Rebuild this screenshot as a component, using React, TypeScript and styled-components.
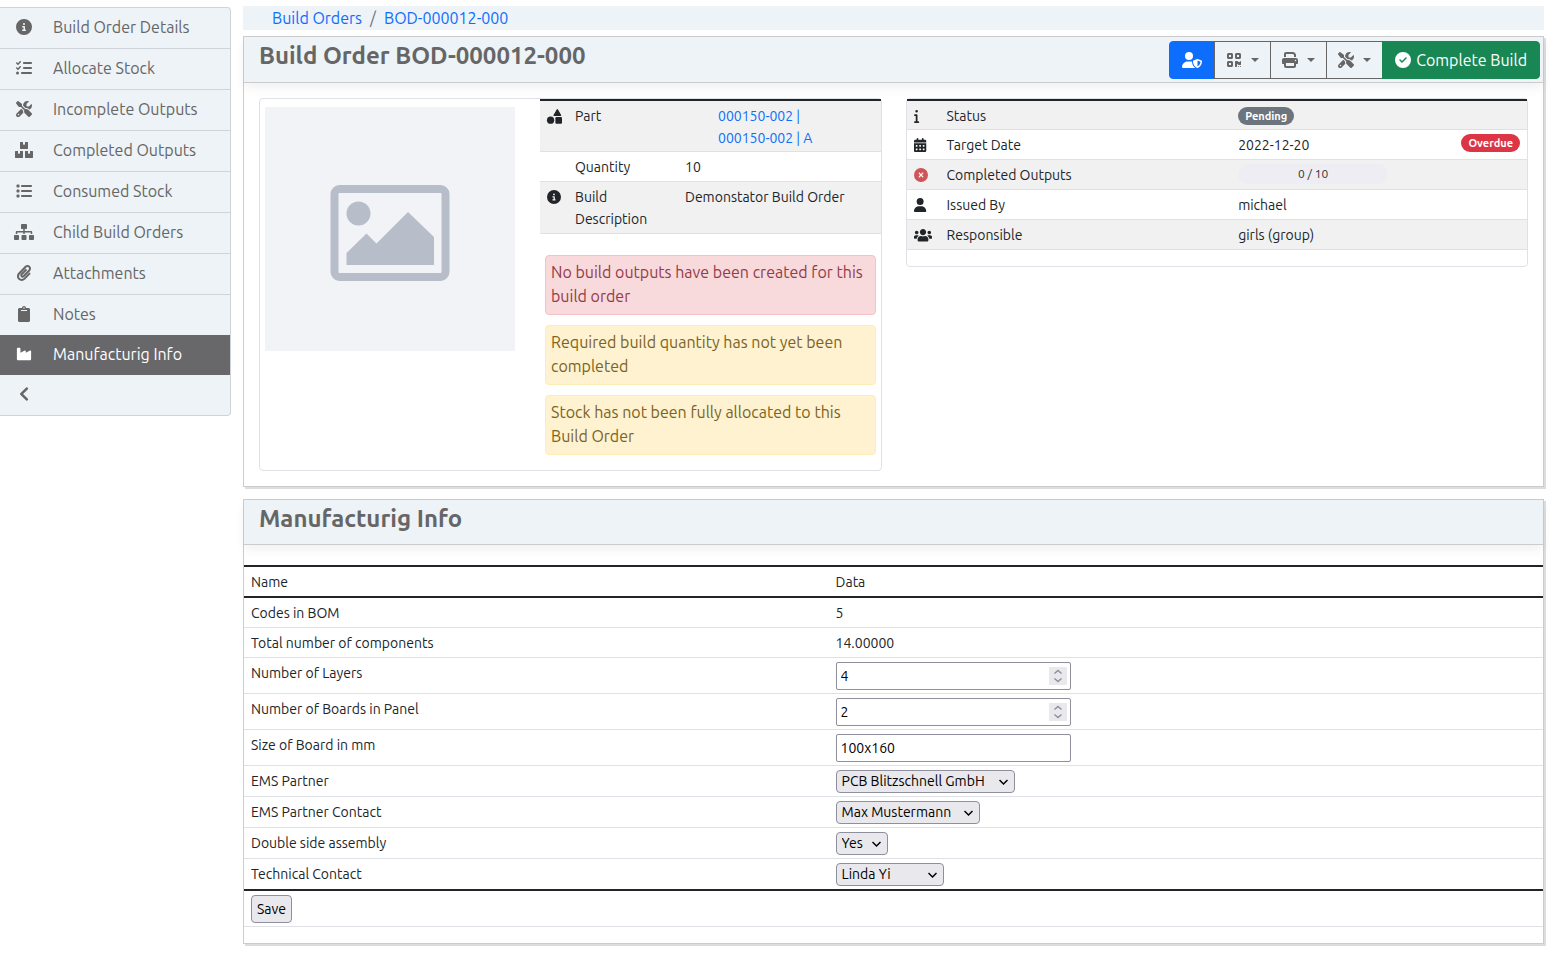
import React from "react";
import styled, { createGlobalStyle, css } from "styled-components";
import {
  FaCircleInfo,
  FaListCheck,
  FaScrewdriverWrench,
  FaList,
  FaIndustry,
  FaUserShield,
  FaQrcode,
  FaPrint,
  FaCircleCheck,
  FaInfo,
  FaCalendarDays,
  FaCircleXmark,
  FaUser,
} from "react-icons/fa6";
import { FaBoxes, FaChevronLeft, FaClipboard, FaPaperclip, FaSitemap, FaUsers } from "react-icons/fa";

const GlobalStyle = createGlobalStyle`
  *, *::before, *::after { box-sizing: border-box; }
  body {
    margin: 0;
    background: #fff;
    color: #212529;
    font-family: "Ubuntu", "Noto Sans", "Open Sans", sans-serif;
    font-size: 16px;
    line-height: 24px;
  }
  a { color: #0d6efd; text-decoration: none; }
  svg { display: block; }
`;

const Page = styled.div`
  display: flex;
  align-items: flex-start;
  gap: 12px;
  padding: 6px 6px 9px 0;
`;

/* Sidebar */

const Sidebar = styled.nav`
  flex: 0 0 231px;
  margin-top: 1px;
  border: 1px solid #ced4da;
  border-left: 0;
  border-radius: 0 4px 4px 0;
  background: #edf3f7;
  overflow: hidden;
`;

const SideLink = styled.a<{ $active?: boolean; $last?: boolean }>`
  display: grid;
  grid-template-columns: 48px 1fr;
  align-items: center;
  column-gap: 5px;
  height: 41px;
  padding-bottom: 2px;
  color: #666;
  border-bottom: 1px solid #ced4da;
  svg { justify-self: center; }
  ${(p) =>
    p.$active &&
    css`
      height: 40px;
      background: #68686a;
      color: #fff;
      border-bottom: 0;
    `}
  ${(p) =>
    p.$last &&
    css`
      height: 40px;
      border-bottom: 0;
    `}
`;

/* Main column */

const Main = styled.main`
  flex: 1;
  min-width: 0;
`;

const Breadcrumb = styled.nav`
  display: flex;
  gap: 8px;
  height: 24px;
  padding-left: 29px;
  margin-bottom: 6px;
  background: #edf3f7;
  color: #6c757d;
`;

const Panel = styled.section`
  border: 1px solid #ccc;
  background: #fff;
  box-shadow: 2px 2px #ddd;
  margin-bottom: 12px;
`;

const PanelHeader = styled.header`
  display: flex;
  justify-content: space-between;
  align-items: flex-start;
  min-height: 45px;
  padding: 4px 3px 3px 15px;
  background: #edf3f7;
  border-bottom: 1px solid #ccc;
  box-shadow: 0 5px 10px rgba(0, 0, 0, 0.06);
`;

const Title = styled.h4`
  margin: 0;
  color: #666;
  font-size: 24px;
  font-weight: 600;
  line-height: 30px;
`;

const Toolbar = styled.div`
  display: flex;
`;

const ToolButton = styled.button<{ $tone?: "primary" | "success" }>`
  display: flex;
  align-items: center;
  justify-content: center;
  gap: 7px;
  height: 38px;
  padding: 0 11px;
  font: inherit;
  color: #666;
  background: #edf3f7;
  border: 1px solid #666;
  margin-left: -1px;
  ${(p) =>
    p.$tone === "primary" &&
    css`
      color: #fff;
      background: #0d6efd;
      border-color: #0d6efd;
      border-radius: 4px 0 0 4px;
      padding: 0 12px;
    `}
  ${(p) =>
    p.$tone === "success" &&
    css`
      color: #fff;
      background: #198754;
      border-color: #198754;
      border-radius: 0 4px 4px 0;
      gap: 5px;
      padding: 0 12px;
    `}
`;

const Caret = styled.span`
  margin-left: 2px;
  border: 4px solid transparent;
  border-top-color: currentColor;
  border-bottom: 0;
`;

const DetailGrid = styled.div`
  display: grid;
  grid-template-columns: 1fr 1fr;
  align-items: start;
  gap: 24px;
  padding: 15px;
`;

const Card = styled.div<{ $split?: boolean }>`
  display: grid;
  grid-template-columns: ${(p) => (p.$split ? "280px minmax(0, 1fr)" : "minmax(0, 1fr)")};
  border: 1px solid #dee2e6;
  border-radius: 4px;
`;

const Thumb = styled.div`
  padding: 8px 5px;
`;

const Table = styled.table<{ $striped?: boolean }>`
  width: 100%;
  table-layout: fixed;
  border-collapse: separate;
  border-spacing: 0;
  border-top: 2px solid #212529;
  margin-bottom: 16px;
  font-size: 14px;
  line-height: 22px;
  td, th {
    padding: 4px 7px 3px;
    border-bottom: 1px solid #dee2e6;
    vertical-align: top;
    text-align: left;
    font-weight: 400;
  }
  td > svg {
    margin-top: 4px;
    overflow: visible;
  }
  ${(p) =>
    p.$striped &&
    css`
      tr:nth-child(odd) > * { background: #f1f1f1; }
      tr:first-child > * { padding-bottom: 2px; }
    `}
`;

const Col = styled.col<{ $w: string }>`
  width: ${(p) => p.$w};
`;

const PartCell = styled.td`
  && { padding-left: 40px; }
`;

const ValueLine = styled.div`
  display: flex;
  justify-content: space-between;
  align-items: center;
  height: 22px;
`;

const Badge = styled.span<{ $danger?: boolean }>`
  padding: 0 7px;
  border-radius: 10px;
  background: ${(p) => (p.$danger ? "#dc3545" : "#6c757d")};
  color: #fff;
  font-size: 11px;
  font-weight: 700;
  line-height: 18px;
  ${(p) => p.$danger && "align-self: flex-start;"}
`;

const Progress = styled.div`
  align-self: flex-start;
  width: 150px;
  height: 20px;
  border-radius: 10px;
  background: #ededf3;
  color: #333;
  font-size: 12px;
  line-height: 20px;
  text-align: center;
`;

const Alerts = styled.div`
  display: grid;
  gap: 10px;
  padding: 5px 5px 15px;
`;

const Alert = styled.div<{ $danger?: boolean }>`
  padding: 4px 5px 6px;
  border: 1px solid ${(p) => (p.$danger ? "#f5c2c7" : "#ffecb5")};
  border-radius: 4px;
  background: ${(p) => (p.$danger ? "#f8d9dc" : "#fff2d0")};
  color: ${(p) => (p.$danger ? "#943c47" : "#7a6422")};
`;

/* Manufacturing form */

const FormBody = styled.form`
  padding-top: 20px;
`;

const FormTable = styled(Table)`
  thead th { border-bottom: 2px solid #212529; }
  tbody tr:last-child > * { border-bottom: 2px solid #212529; }
`;

const Field = styled.input`
  display: block;
  width: 100%;
  height: 28px;
  padding: 2px 4px;
  border: 1px solid #8f8f9d;
  border-radius: 2px;
  background: #fff;
  color: #000;
  font: inherit;
  appearance: textfield;
  &::-webkit-inner-spin-button,
  &::-webkit-outer-spin-button { appearance: none; margin: 0; }
`;

const FieldBox = styled.div`
  position: relative;
  width: 235px;
`;

const Spinner = styled.span`
  position: absolute;
  right: 4px;
  top: 5px;
  width: 18px;
  height: 18px;
  background: #e9e9ed;
  color: #8f8f9d;
  pointer-events: none;
`;

const SelectBox = styled.div<{ $w: number }>`
  position: relative;
  width: ${(p) => p.$w}px;
  svg {
    position: absolute;
    right: 7px;
    top: 8px;
    pointer-events: none;
  }
`;

const Select = styled.select`
  display: block;
  width: 100%;
  height: 23px;
  padding: 0 5px;
  border: 1px solid #8f8f9d;
  border-radius: 4px;
  background: #e9e9ed;
  color: #000;
  font: inherit;
  line-height: 21px;
  appearance: none;
`;

const SaveButton = styled.button`
  display: block;
  height: 28px;
  padding: 0 5px;
  border: 1px solid #8f8f9d;
  border-radius: 4px;
  background: #e9e9ed;
  color: #000;
  font: inherit;
`;

const SIDE_ITEMS = [
  { label: "Build Order Details", icon: <FaCircleInfo size={16} /> },
  { label: "Allocate Stock", icon: <FaListCheck size={16} /> },
  { label: "Incomplete Outputs", icon: <FaScrewdriverWrench size={16} /> },
  { label: "Completed Outputs", icon: <FaBoxes size={18} /> },
  { label: "Consumed Stock", icon: <FaList size={16} /> },
  { label: "Child Build Orders", icon: <FaSitemap size={20} /> },
  { label: "Attachments", icon: <FaPaperclip size={16} /> },
  { label: "Notes", icon: <FaClipboard size={16} /> },
];

const ShapesIcon = () => (
  <svg width="15" height="15" viewBox="0 0 512 512" fill="currentColor" stroke="currentColor" strokeLinejoin="round">
    <circle cx="122" cy="382" r="124" stroke="none" />
    <rect x="286" y="276" width="226" height="226" rx="36" stroke="none" />
    <path d="M353 26L244 216H462Z" strokeWidth="48" />
  </svg>
);

const Placeholder = () => (
  <svg width="250" height="244" viewBox="0 0 250 244" role="img" aria-label="No image">
    <rect width="250" height="244" fill="#f2f3f6" />
    <rect x="69.5" y="82" width="111" height="88" rx="5" fill="none" stroke="#b8bdca" strokeWidth="8" />
    <circle cx="93.5" cy="106.5" r="12" fill="#b8bdca" />
    <path d="M81.500 158V146L101.500 126.500L111.500 136.500L143 105L169 130V158Z" fill="#b8bdca" />
  </svg>
);

const NumberField = ({ id, value }: { id: string; value: number }) => (
  <FieldBox>
    <Field id={id} type="number" defaultValue={value} />
    <Spinner>
      <svg width="18" height="18" viewBox="0 0 18 18" fill="none" stroke="currentColor" strokeWidth="1.500">
        <path d="M5.500 6.500L9 3.500L12.500 6.500M5.500 11.500L9 14.500L12.500 11.500" />
      </svg>
    </Spinner>
  </FieldBox>
);

const SelectField = ({ id, value, width }: { id: string; value: string; width: number }) => (
  <SelectBox $w={width}>
    <Select id={id} defaultValue={value}>
      <option>{value}</option>
    </Select>
    <svg width="9" height="8" viewBox="0 0 9 8" fill="none" stroke="#000" strokeWidth="1.500">
      <path d="M0.500 2L4.500 6L8.500 2" />
    </svg>
  </SelectBox>
);

const FORM_ROWS = [
  { id: "layers", label: "Number of Layers", field: <NumberField id="layers" value={4} /> },
  { id: "boards", label: "Number of Boards in Panel", field: <NumberField id="boards" value={2} /> },
  {
    id: "size",
    label: "Size of Board in mm",
    field: (
      <FieldBox>
        <Field id="size" type="text" defaultValue="100x160" />
      </FieldBox>
    ),
  },
  { id: "ems", label: "EMS Partner", field: <SelectField id="ems" value="PCB Blitzschnell GmbH" width={179} /> },
  { id: "contact", label: "EMS Partner Contact", field: <SelectField id="contact" value="Max Mustermann" width={144} /> },
  { id: "double", label: "Double side assembly", field: <SelectField id="double" value="Yes" width={52} /> },
  { id: "tech", label: "Technical Contact", field: <SelectField id="tech" value="Linda Yi" width={108} /> },
];

export default function App() {
  return (
    <>
      <GlobalStyle />
      <Page>
        <Sidebar aria-label="Build order">
          {SIDE_ITEMS.map((item, i) => (
            <SideLink href="#" key={item.label} $last={i === SIDE_ITEMS.length - 1}>
              {item.icon}
              {item.label}
            </SideLink>
          ))}
          <SideLink href="#" $active>
            <FaIndustry size={16} />
            Manufacturig Info
          </SideLink>
          <SideLink href="#" $last aria-label="Collapse menu">
            <FaChevronLeft size={16} />
          </SideLink>
        </Sidebar>

        <Main>
          <Breadcrumb aria-label="Breadcrumb">
            <a href="#">Build Orders</a>
            <span>/</span>
            <a href="#">BOD-000012-000</a>
          </Breadcrumb>

          <Panel>
            <PanelHeader>
              <Title>Build Order BOD-000012-000</Title>
              <Toolbar>
                <ToolButton $tone="primary" aria-label="Admin">
                  <FaUserShield size={20} />
                </ToolButton>
                <ToolButton aria-label="Barcode actions">
                  <FaQrcode size={16} />
                  <Caret />
                </ToolButton>
                <ToolButton aria-label="Print actions">
                  <FaPrint size={16} />
                  <Caret />
                </ToolButton>
                <ToolButton aria-label="Build actions">
                  <FaScrewdriverWrench size={16} />
                  <Caret />
                </ToolButton>
                <ToolButton $tone="success">
                  <FaCircleCheck size={16} />
                  Complete Build
                </ToolButton>
              </Toolbar>
            </PanelHeader>
            <DetailGrid>
              <Card $split>
                <Thumb>
                  <Placeholder />
                </Thumb>
                <div>
                  <Table $striped>
                    <colgroup>
                      <Col $w="28px" />
                      <Col $w="110px" />
                      <Col $w="auto" />
                    </colgroup>
                    <tbody>
                      <tr>
                        <td><ShapesIcon /></td>
                        <td>Part</td>
                        <PartCell>
                          <a href="#">000150-002 |<br />000150-002 | A</a>
                        </PartCell>
                      </tr>
                      <tr>
                        <td />
                        <td>Quantity</td>
                        <td>10</td>
                      </tr>
                      <tr>
                        <td><FaCircleInfo size={14} /></td>
                        <td>Build Description</td>
                        <td>Demonstator Build Order</td>
                      </tr>
                    </tbody>
                  </Table>
                  <Alerts>
                    <Alert $danger>No build outputs have been created for this build order</Alert>
                    <Alert>Required build quantity has not yet been completed</Alert>
                    <Alert>Stock has not been fully allocated to this Build Order</Alert>
                  </Alerts>
                </div>
              </Card>
              <Card>
                <Table $striped>
                  <colgroup>
                    <Col $w="33px" />
                    <Col $w="47%" />
                    <Col $w="auto" />
                  </colgroup>
                  <tbody>
                    <tr>
                      <td><FaInfo size={14} preserveAspectRatio="xMinYMid" /></td>
                      <td>Status</td>
                      <td><ValueLine><Badge>Pending</Badge></ValueLine></td>
                    </tr>
                    <tr>
                      <td><FaCalendarDays size={14} preserveAspectRatio="xMinYMid" /></td>
                      <td>Target Date</td>
                      <td><ValueLine>2022-12-20<Badge $danger>Overdue</Badge></ValueLine></td>
                    </tr>
                    <tr>
                      <td><FaCircleXmark size={14} color="#d05358" /></td>
                      <td>Completed Outputs</td>
                      <td><ValueLine><Progress>0 / 10</Progress></ValueLine></td>
                    </tr>
                    <tr>
                      <td><FaUser size={14} preserveAspectRatio="xMinYMid" /></td>
                      <td>Issued By</td>
                      <td>michael</td>
                    </tr>
                    <tr>
                      <td><FaUsers size={18} viewBox="0 64 640 512" /></td>
                      <td>Responsible</td>
                      <td>girls (group)</td>
                    </tr>
                  </tbody>
                </Table>
              </Card>
            </DetailGrid>
          </Panel>

          <Panel>
            <PanelHeader>
              <Title>Manufacturig Info</Title>
            </PanelHeader>
            <FormBody onSubmit={(e: React.FormEvent) => e.preventDefault()}>
              <FormTable>
                <colgroup>
                  <Col $w="45%" />
                  <Col $w="auto" />
                </colgroup>
                <thead>
                  <tr>
                    <th scope="col">Name</th>
                    <th scope="col">Data</th>
                  </tr>
                </thead>
                <tbody>
                  <tr>
                    <td>Codes in BOM</td>
                    <td>5</td>
                  </tr>
                  <tr>
                    <td>Total number of components</td>
                    <td>14.00000</td>
                  </tr>
                  {FORM_ROWS.map((row) => (
                    <tr key={row.id}>
                      <td><label htmlFor={row.id}>{row.label}</label></td>
                      <td>{row.field}</td>
                    </tr>
                  ))}
                </tbody>
                <tfoot>
                  <tr>
                    <td colSpan={2}><SaveButton type="submit">Save</SaveButton></td>
                  </tr>
                </tfoot>
              </FormTable>
            </FormBody>
          </Panel>
        </Main>
      </Page>
    </>
  );
}
